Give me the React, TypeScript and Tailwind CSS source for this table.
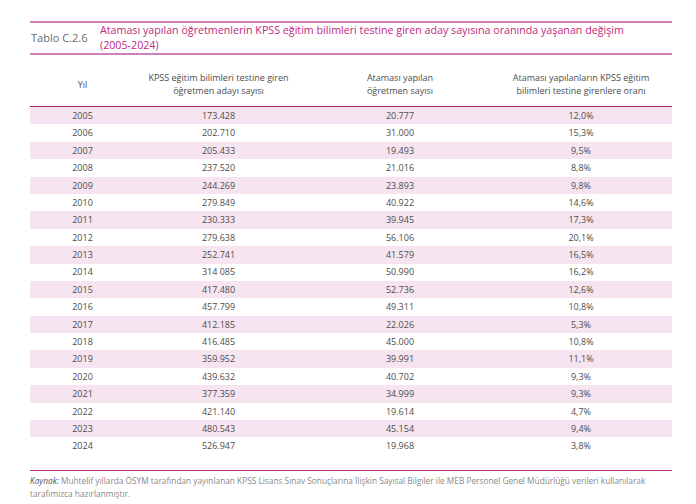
import React from "react";

const rows: [string, string, string, string][] = [
  ["2005", "173.428", "20.777", "12,0%"],
  ["2006", "202.710", "31.000", "15,3%"],
  ["2007", "205.433", "19.493", "9,5%"],
  ["2008", "237.520", "21.016", "8,8%"],
  ["2009", "244.269", "23.893", "9,8%"],
  ["2010", "279.849", "40.922", "14,6%"],
  ["2011", "230.333", "39.945", "17,3%"],
  ["2012", "279.638", "56.106", "20,1%"],
  ["2013", "252.741", "41.579", "16,5%"],
  ["2014", "314 085", "50.990", "16,2%"],
  ["2015", "417.480", "52.736", "12,6%"],
  ["2016", "457.799", "49.311", "10,8%"],
  ["2017", "412.185", "22.026", "5,3%"],
  ["2018", "416.485", "45.000", "10,8%"],
  ["2019", "359.952", "39.991", "11,1%"],
  ["2020", "439.632", "40.702", "9,3%"],
  ["2021", "377.359", "34.999", "9,3%"],
  ["2022", "421.140", "19.614", "4,7%"],
  ["2023", "480.543", "45.154", "9,4%"],
  ["2024", "526.947", "19.968", "3,8%"],
];

const cols = "grid grid-cols-[97px_183px_180px_182px]";

export default function App() {
  return (
    <div
      className="w-[696px] h-[504px] bg-white overflow-hidden pt-[21px] pl-[30px] pr-[24px]"
      style={{ fontFamily: '"Open Sans", "Noto Sans", sans-serif' }}
    >
      <div className="border-t-2 border-b-2 border-[#cf7fb9] flex items-center h-[34px]">
        <div className="w-[70px] pl-[1px] text-[11px] text-[#6b6b6b]">Tablo C.2.6</div>
        <div className="flex-1 text-[10.7px] leading-[15px] text-[#c2287f]">
          Ataması yapılan öğretmenlerin KPSS eğitim bilimleri testine giren aday sayısına oranında yaşanan değişim
          <br />
          (2005-2024)
        </div>
      </div>

      <div className={`${cols} h-[52px] pt-[16px] border-b border-[#a8276f] text-[9px] leading-[13px] text-[#4d4d4d] text-center`}>
        <div className="flex items-center justify-center h-[26px] pl-[8px]">Yıl</div>
        <div>
          KPSS eğitim bilimleri testine giren
          <br />
          öğretmen adayı sayısı
        </div>
        <div>
          Ataması yapılan
          <br />
          öğretmen sayısı
        </div>
        <div>
          Ataması yapılanların KPSS eğitim
          <br />
          bilimleri testine girenlere oranı
        </div>
      </div>

      <div>
        {rows.map((r, i) => (
          <div
            key={r[0]}
            className={`${cols} h-[17.4px] items-center text-[9px] text-[#4d4d4d] text-center ${
              i % 2 === 0 ? "bg-[#f6e4f0]" : "bg-white"
            }`}
          >
            <div className="pl-[8px]">{r[0]}</div>
            <div>{r[1]}</div>
            <div>{r[2]}</div>
            <div>{r[3]}</div>
          </div>
        ))}
      </div>

      <div className="mt-[15px] border-t-[1.5px] border-[#b83584] pt-[3px] text-[8.3px] leading-[13px] text-[#8a8a8a]">
        <span className="italic text-[#555]">Kaynak:</span> Muhtelif yıllarda ÖSYM tarafından yayınlanan KPSS Lisans Sınav Sonuçlarına İlişkin Sayısal Bilgiler ile MEB Personel Genel Müdürlüğü verileri kullanılarak
        <br />
        tarafımızca hazırlanmıştır.
      </div>
    </div>
  );
}
